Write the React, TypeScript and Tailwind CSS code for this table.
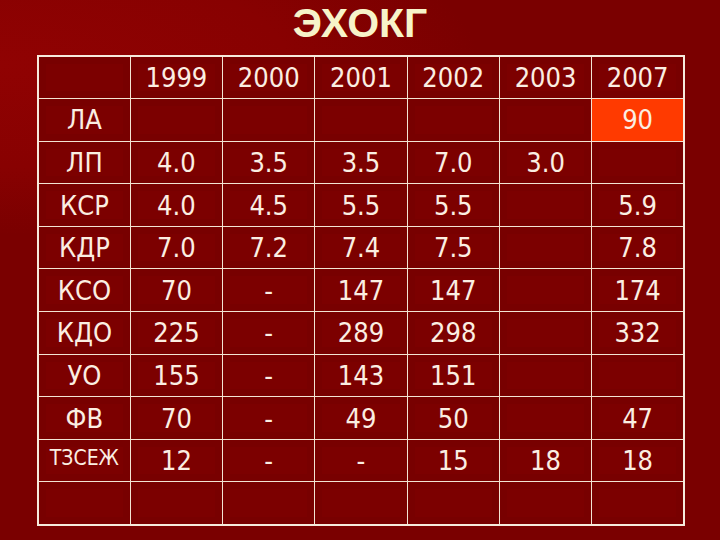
import React from "react";

const header = ["", "1999", "2000", "2001", "2002", "2003", "2007"];
const rows: string[][] = [
  ["ЛА", "", "", "", "", "", "90"],
  ["ЛП", "4.0", "3.5", "3.5", "7.0", "3.0", ""],
  ["КСР", "4.0", "4.5", "5.5", "5.5", "", "5.9"],
  ["КДР", "7.0", "7.2", "7.4", "7.5", "", "7.8"],
  ["КСО", "70", "-", "147", "147", "", "174"],
  ["КДО", "225", "-", "289", "298", "", "332"],
  ["УО", "155", "-", "143", "151", "", ""],
  ["ФВ", "70", "-", "49", "50", "", "47"],
  ["ТЗСЕЖ", "12", "-", "-", "15", "18", "18"],
  ["", "", "", "", "", "", ""],
];

export default function App() {
  return (
    <div className="w-[720px] h-[540px] overflow-hidden bg-[radial-gradient(ellipse_480px_170px_at_0%_12%,#900202_0%,#880101_60%,#7a0000_100%)] relative">
      <div
        className="h-[55px] flex justify-center text-[41px] font-bold leading-[46px] text-[#f7f3c9]"
        style={{ fontFamily: '"Liberation Sans", Arial, sans-serif' }}
      >
        ЭХОКГ
      </div>
      <div className="pl-[37px]">
        <table
          className="w-[648px] table-fixed border-collapse border-2 border-[#f6eadc] text-[#fbeee2] font-stretch-condensed"
          style={{ fontFamily: '"DejaVu Sans Condensed", "DejaVu Sans", sans-serif' }}
        >
          <tbody>
            {[header, ...rows].map((r, ri) => (
              <tr key={ri} className="h-[42.6px]">
                {r.map((c, ci) => {
                  const hl = ri === 1 && ci === 6;
                  const small = c === "ТЗСЕЖ";
                  return (
                    <td
                      key={ci}
                      className={
                        "border border-[#f3e3d3] text-center align-middle p-0 " +
                        (hl ? "bg-[#ff3a00] shadow-none " : "bg-[#7c0000] shadow-[inset_0_0_0_7px_#780000] ") +
                        (small ? "text-[21px] leading-none align-top pt-[8px]" : "text-[27px] leading-none")
                      }
                    >
                      {c}
                    </td>
                  );
                })}
              </tr>
            ))}
          </tbody>
        </table>
      </div>
    </div>
  );
}
